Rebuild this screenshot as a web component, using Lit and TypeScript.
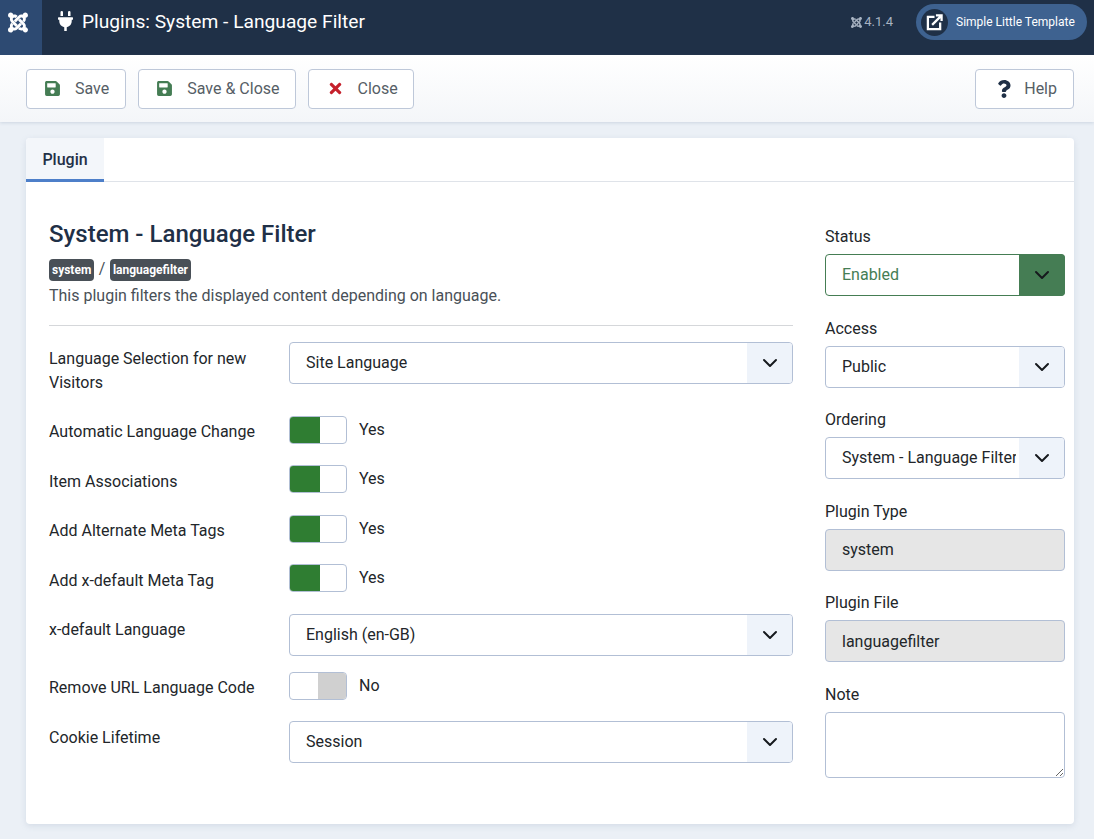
import { LitElement, html, css, svg } from 'lit';
import { customElement } from 'lit/decorators.js';

const JOOMLA = svg`<path d="M.6 92.1C.6 58.8 27.4 32 60.4 32c30 0 54.5 21.9 59.2 50.2 32.6-7.6 67.1.6 96.5 30l-44.3 44.3c-20.5-20.5-42.6-16.3-55.4-3.5-14.3 14.3-14.3 37.9 0 52.2l99.5 99.5-44 44.3c-87.7-87.2-49.7-49.7-99.8-99.7-26.8-26.5-35-64.8-24.8-98.9C20.4 144.6.6 120.7.6 92.1zm129.5 116.4l44.3 44.3c10-10 89.7-89.7 99.7-99.8 14.3-14.3 37.6-14.3 51.9 0 12.8 12.8 17 35-3.5 55.4l44 44.3c31.2-31.2 38.5-67.6 28.9-101.2 29.2-4.1 51.9-29.2 51.9-59.5 0-33.2-26.8-60.1-59.8-60.1-30.3 0-55.4 22.5-59.5 51.6-33.8-9.9-71.7-1.5-98.3 25.1-18.3 19.1-71.1 71.5-99.6 99.9zm266.3 152.2c8.2-32.7-.9-68.5-26.3-93.9-11.8-12.2 5 4.7-99.5-99.7l-44.3 44.3 99.7 99.7c14.3 14.3 14.3 37.6 0 51.9-12.8 12.8-35 17-55.4-3.5l-44 44.3c27.6 30.2 68 38.8 102.7 28 5.5 27.4 29.7 48.1 58.9 48.1 33 0 59.8-26.8 59.8-60.1 0-30.2-22.5-55-51.6-59.1zm-84.3-53.1l-44-44.3c-87.2 86.5-50.4 50.4-99.7 99.8-14.3 14.3-37.6 14.3-51.9 0-13.1-13.4-16.9-35.3 3.2-55.4l-44-44.3c-30.2 30.2-38 65.2-29.5 98.3-26.7 6-46.8 29.9-46.8 58.4 0 33.2 26.8 60.1 59.8 60.1 28.6 0 52.5-19.8 58.6-46.7 32.7 8.2 68.5-.6 94.2-26 32.1-32 12.2-12.4 99.5-99.7z"/>`;
const SAVE = svg`<path d="M433.941 129.941l-83.882-83.882A48 48 0 0 0 316.118 32H48C21.49 32 0 53.49 0 80v352c0 26.51 21.49 48 48 48h352c26.51 0 48-21.49 48-48V163.882a48 48 0 0 0-14.059-33.941zM224 416c-35.346 0-64-28.654-64-64 0-35.346 28.654-64 64-64s64 28.654 64 64c0 35.346-28.654 64-64 64zm96-304.52V212c0 6.627-5.373 12-12 12H76c-6.627 0-12-5.373-12-12V108c0-6.627 5.373-12 12-12h228.52c3.183 0 6.235 1.264 8.485 3.515l3.48 3.48A11.996 11.996 0 0 1 320 111.48z"/>`;
const TIMES = svg`<path d="M242.72 256l100.07-100.07c12.28-12.28 12.28-32.19 0-44.48l-22.24-22.24c-12.28-12.28-32.19-12.28-44.48 0L176 189.28 75.93 89.21c-12.28-12.28-32.19-12.28-44.48 0L9.21 111.45c-12.28 12.28-12.28 32.19 0 44.48L109.28 256 9.21 356.07c-12.28 12.28-12.28 32.19 0 44.48l22.24 22.24c12.28 12.28 32.2 12.28 44.48 0L176 322.72l100.07 100.07c12.28 12.28 32.2 12.28 44.48 0l22.24-22.24c12.28-12.28 12.28-32.19 0-44.48L242.72 256z"/>`;
const QUESTION = svg`<path d="M202.021 0C122.202 0 70.503 32.703 29.914 91.026c-7.363 10.58-5.093 25.086 5.178 32.874l43.138 32.709c10.373 7.865 25.132 6.026 33.253-4.148 25.049-31.381 43.63-49.449 82.757-49.449 30.764 0 68.816 19.799 68.816 49.631 0 22.552-18.617 34.134-48.993 51.164-35.423 19.86-82.299 44.576-82.299 106.405V320c0 13.255 10.745 24 24 24h72.471c13.255 0 24-10.745 24-24v-5.773c0-42.86 125.268-44.645 125.268-160.627C377.504 66.256 286.902 0 202.021 0zM192 373.459c-38.196 0-69.271 31.075-69.271 69.271 0 38.195 31.075 69.27 69.271 69.27s69.271-31.075 69.271-69.271-31.075-69.27-69.271-69.27z"/>`;
const PLUG = svg`<path d="M320,32a32,32,0,0,0-64,0v96h64Zm48,128H16A16,16,0,0,0,0,176v32a16,16,0,0,0,16,16H32v32A160.07,160.07,0,0,0,160,412.8V512h64V412.8A160.07,160.07,0,0,0,352,256V224h16a16,16,0,0,0,16-16V176A16,16,0,0,0,368,160ZM128,32a32,32,0,0,0-64,0v96h64Z"/>`;

@customElement('select-box')
class SelectBox extends LitElement {
    static properties = {
        value: { type: String },
        state: { type: String },
    };
    value = '';
    state = '';

    static styles = css`
    :host {
      display: block;
      position: relative;
      height: 42px;
    }
    select {
      appearance: none;
      display: block;
      width: 100%;
      height: 42px;
      margin: 0;
      padding: 0 48px 0 16px;
      border: 1px solid #b2bfd5;
      border-radius: 4px;
      background: #fff;
      color: #22262a;
      font: 16px/24px Roboto, sans-serif;
      box-sizing: border-box;
    }
    .arrow {
      position: absolute;
      top: 1px;
      right: 1px;
      bottom: 1px;
      width: 45px;
      display: flex;
      align-items: center;
      justify-content: center;
      background: #eef3fa;
      border-radius: 0 3px 3px 0;
      pointer-events: none;
    }
    .arrow svg {
      width: 16px;
      height: 16px;
      fill: none;
      stroke: #16191d;
      stroke-width: 2;
      stroke-linecap: round;
      stroke-linejoin: round;
    }
    .ok select {
      border-color: #457d54;
      color: #457d54;
    }
    .ok .arrow {
      top: 0;
      right: 0;
      bottom: 0;
      width: 46px;
      background: #457d54;
      border-radius: 0 4px 4px 0;
    }
    `;

    render() {
        return html`
      <div class=${this.state}>
        <select>
          <option>${this.value}</option>
        </select>
        <span class="arrow">
          <svg viewBox="0 0 16 16"><path d="M2 5l6 6 6-6" /></svg>
        </span>
      </div>
    `;
    }
}

@customElement('switch-field')
class SwitchField extends LitElement {
    static properties = {
        on: { type: Boolean },
    };
    on = false;

    static styles = css`
    :host {
      display: flex;
      align-items: flex-start;
      gap: 12px;
      color: #22262a;
      font: 16px/24px Roboto, sans-serif;
    }
    .track {
      display: flex;
      width: 58px;
      height: 28px;
      box-sizing: border-box;
      border: 1px solid #b2bfd5;
      border-radius: 4px;
      overflow: hidden;
      background: #fff;
    }
    .track i {
      display: block;
      width: 30px;
      background: #2f7d32;
    }
    .off {
      justify-content: flex-end;
    }
    .off i {
      width: 28px;
      background: #d0d0d0;
    }
    .text {
      margin-top: 2px;
    }
    `;

    render() {
        return html`
      <span class="track ${this.on ? '' : 'off'}"><i></i></span>
      <span class="text">${this.on ? 'Yes' : 'No'}</span>
    `;
    }
}

@customElement('app-root')
class AppRoot extends LitElement {
    static styles = css`
    :host {
      display: block;
      min-height: 839px;
      background: #ebf0f6;
      color: #22262a;
      font: 16px/24px Roboto, sans-serif;
    }
    .topbar {
      display: flex;
      align-items: center;
      height: 55px;
      background: #1f3047;
      color: #fff;
    }
    .brand {
      display: flex;
      align-items: center;
      justify-content: center;
      width: 42px;
      height: 100%;
      box-sizing: border-box;
      padding: 0 6px 11px 0;
      background: #2d4a72;
    }
    .brand svg {
      width: 20px;
      height: 23px;
      fill: #fff;
    }
    .page-title {
      display: flex;
      align-items: center;
      gap: 9px;
      margin: 0 0 11px 16px;
      flex: 1;
      font-size: 19.2px;
      font-weight: 400;
      line-height: 24px;
    }
    .page-title svg {
      width: 15px;
      height: 20px;
      fill: #fff;
      margin-top: -3px;
    }
    .version {
      display: flex;
      align-items: center;
      gap: 2px;
      margin: 0 23px 11px 0;
      color: #a8b3c2;
      font-size: 13px;
    }
    .version svg {
      width: 11px;
      height: 13px;
      fill: #a8b3c2;
    }
    .site {
      display: flex;
      align-items: center;
      gap: 8px;
      height: 36px;
      width: 171px;
      box-sizing: border-box;
      margin: 0 7px 11px 0;
      padding-left: 5px;
      border-radius: 18px;
      background: #3e6290;
      color: #fff;
      font-size: 12px;
      white-space: nowrap;
    }
    .site .disc {
      display: flex;
      align-items: center;
      justify-content: center;
      width: 27px;
      height: 27px;
      border-radius: 50%;
      background: #1f3047;
    }
    .site svg {
      width: 17px;
      height: 17px;
      fill: none;
      stroke: #fff;
      stroke-width: 2.4;
    }
    .toolbar {
      display: flex;
      align-items: center;
      gap: 12px;
      height: 67px;
      padding: 0 20px 0 26px;
      background: linear-gradient(#fff, #f4f6f9);
      box-shadow: 0 1px 3px rgba(120, 140, 170, 0.25);
    }
    .btn {
      display: flex;
      align-items: center;
      height: 40px;
      box-sizing: border-box;
      margin: 0;
      padding: 0 15px 0 18px;
      border: 1px solid #bec8d9;
      border-radius: 4px;
      background: #fff;
      color: #565e66;
      font: 16px/24px Roboto, sans-serif;
    }
    .btn svg {
      width: 15px;
      height: 17px;
      margin-right: 15px;
    }
    .btn .save {
      fill: #457d54;
    }
    .btn .close {
      fill: #c5202b;
      width: 13px;
      margin-right: 16px;
    }
    .btn .help {
      fill: #1f3047;
      width: 14px;
      height: 18px;
      margin-right: 13px;
    }
    .save-btn {
      padding-right: 16px;
    }
    .close-btn {
      padding-left: 20px;
    }
    .help-btn {
      margin-left: auto;
      padding: 0 16px 0 21px;
    }
    .card {
      margin: 16px 20px 0 26px;
      height: 686px;
      box-sizing: border-box;
      background: #fff;
      border-radius: 4px;
      box-shadow: 0 2px 6px rgba(120, 140, 170, 0.2);
    }
    .tabs {
      display: flex;
      height: 44px;
      box-sizing: border-box;
      border-bottom: 1px solid #dfe3e9;
    }
    .tab {
      width: 78px;
      height: 44px;
      box-sizing: border-box;
      background: #f3f6fa;
      border-bottom: 3px solid #4d7fc9;
      border-top-left-radius: 4px;
      color: #1f3047;
      font-weight: 500;
      line-height: 44px;
      text-align: center;
    }
    .panel {
      display: grid;
      grid-template-columns: 744px 240px;
      gap: 32px;
      padding: 38px 9px 0 23px;
    }
    h1 {
      margin: 0;
      color: #1f3047;
      font-size: 24px;
      font-weight: 500;
      line-height: 29px;
    }
    .crumbs {
      display: flex;
      align-items: center;
      gap: 4.5px;
      margin-top: 10px;
      height: 22px;
      color: #495057;
    }
    .crumbs .slash {
      margin-top: -2px;
    }
    .badge {
      height: 22px;
      padding: 0 3px;
      border-radius: 4px;
      background: #495057;
      color: #fff;
      font-size: 12px;
      font-weight: 700;
      line-height: 22px;
    }
    .desc {
      margin: 3px 0 0;
      color: #495057;
    }
    hr {
      height: 1px;
      margin: 17px 0 16px;
      border: 0;
      background: #d5d7da;
    }
    .row {
      display: grid;
      grid-template-columns: 240px 504px;
      margin-bottom: 16px;
    }
    .row label {
      padding: 4.75px 16px 4.75px 0;
      color: #22262a;
    }
    .side {
      padding-top: 5px;
    }
    .field {
      margin-bottom: 20.6px;
    }
    .field label {
      display: block;
      margin-bottom: 5px;
      line-height: 24px;
    }
    .field input {
      display: block;
      width: 100%;
      height: 42px;
      box-sizing: border-box;
      padding: 0 16px;
      border: 1px solid #b2bfd5;
      border-radius: 4px;
      background: #e6e6e6;
      color: #22262a;
      font: 16px/24px Roboto, sans-serif;
    }
    .field textarea {
      display: block;
      width: 100%;
      height: 66px;
      box-sizing: border-box;
      padding: 8px 16px;
      border: 1px solid #b2bfd5;
      border-radius: 4px;
      background: #fff;
      font: 16px/24px Roboto, sans-serif;
    }
    `;

    render() {
        return html`
      <header class="topbar">
        <div class="brand"><svg viewBox="0 0 448 512">${JOOMLA}</svg></div>
        <h2 class="page-title">
          <svg viewBox="0 0 384 512">${PLUG}</svg>
          Plugins: System - Language Filter
        </h2>
        <span class="version"><svg viewBox="0 0 448 512">${JOOMLA}</svg> 4.1.4</span>
        <a class="site">
          <span class="disc">
            <svg viewBox="0 0 18 18">
              <path d="M9 3H2v13h13V9" />
              <path d="M6.5 11.5L16 2M10.5 1.5h6v6" />
            </svg>
          </span>
          Simple Little Template
        </a>
      </header>

      <div class="toolbar">
        <button class="btn save-btn"><svg class="save" viewBox="0 0 448 512">${SAVE}</svg>Save</button>
        <button class="btn"><svg class="save" viewBox="0 0 448 512">${SAVE}</svg>Save &amp; Close</button>
        <button class="btn close-btn"><svg class="close" viewBox="0 0 352 512">${TIMES}</svg>Close</button>
        <button class="btn help-btn"><svg class="help" viewBox="0 0 384 512">${QUESTION}</svg>Help</button>
      </div>

      <main class="card">
        <div class="tabs"><div class="tab">Plugin</div></div>
        <div class="panel">
          <section>
            <h1>System - Language Filter</h1>
            <div class="crumbs">
              <span class="badge">system</span>
              <span class="slash">/</span>
              <span class="badge">languagefilter</span>
            </div>
            <p class="desc">This plugin filters the displayed content depending on language.</p>
            <hr />
            <div class="row">
              <label>Language Selection for new Visitors</label>
              <select-box value="Site Language"></select-box>
            </div>
            <div class="row">
              <label>Automatic Language Change</label>
              <switch-field on></switch-field>
            </div>
            <div class="row">
              <label>Item Associations</label>
              <switch-field on></switch-field>
            </div>
            <div class="row">
              <label>Add Alternate Meta Tags</label>
              <switch-field on></switch-field>
            </div>
            <div class="row">
              <label>Add x-default Meta Tag</label>
              <switch-field on></switch-field>
            </div>
            <div class="row">
              <label>x-default Language</label>
              <select-box value="English (en-GB)"></select-box>
            </div>
            <div class="row">
              <label>Remove URL Language Code</label>
              <switch-field></switch-field>
            </div>
            <div class="row">
              <label>Cookie Lifetime</label>
              <select-box value="Session"></select-box>
            </div>
          </section>

          <aside class="side">
            <div class="field">
              <label>Status</label>
              <select-box value="Enabled" state="ok"></select-box>
            </div>
            <div class="field">
              <label>Access</label>
              <select-box value="Public"></select-box>
            </div>
            <div class="field">
              <label>Ordering</label>
              <select-box value="System - Language Filter"></select-box>
            </div>
            <div class="field">
              <label>Plugin Type</label>
              <input readonly value="system" />
            </div>
            <div class="field">
              <label>Plugin File</label>
              <input readonly value="languagefilter" />
            </div>
            <div class="field">
              <label>Note</label>
              <textarea></textarea>
            </div>
          </aside>
        </div>
      </main>
    `;
    }
}

declare global {
    interface HTMLElementTagNameMap {
        'app-root': AppRoot;
        'select-box': SelectBox;
        'switch-field': SwitchField;
    }
}
